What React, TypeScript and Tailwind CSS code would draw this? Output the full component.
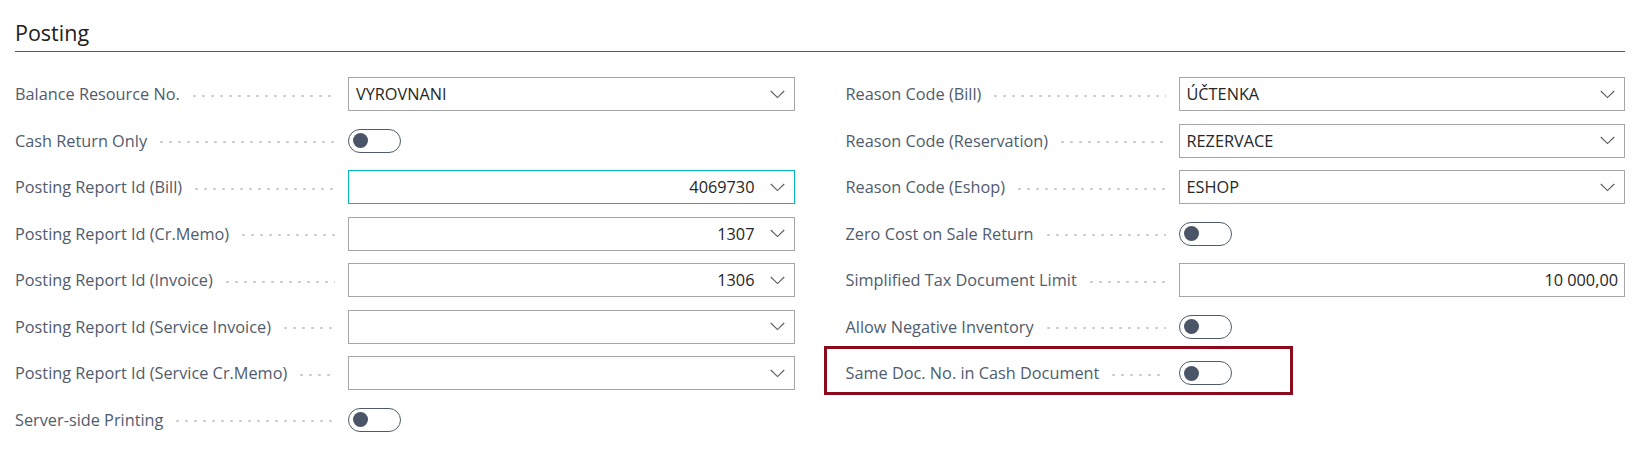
import React from 'react'

type Field =
  | { label: string; kind: 'select'; value?: string; align?: 'left' | 'right'; focused?: boolean }
  | { label: string; kind: 'text'; value: string; align?: 'left' | 'right' }
  | { label: string; kind: 'toggle'; highlight?: boolean }

const leftFields: Field[] = [
  { label: 'Balance Resource No.', kind: 'select', value: 'VYROVNANI' },
  { label: 'Cash Return Only', kind: 'toggle' },
  { label: 'Posting Report Id (Bill)', kind: 'select', value: '4069730', align: 'right', focused: true },
  { label: 'Posting Report Id (Cr.Memo)', kind: 'select', value: '1307', align: 'right' },
  { label: 'Posting Report Id (Invoice)', kind: 'select', value: '1306', align: 'right' },
  { label: 'Posting Report Id (Service Invoice)', kind: 'select' },
  { label: 'Posting Report Id (Service Cr.Memo)', kind: 'select' },
  { label: 'Server-side Printing', kind: 'toggle' }
]

const rightFields: Field[] = [
  { label: 'Reason Code (Bill)', kind: 'select', value: 'ÚČTENKA' },
  { label: 'Reason Code (Reservation)', kind: 'select', value: 'REZERVACE' },
  { label: 'Reason Code (Eshop)', kind: 'select', value: 'ESHOP' },
  { label: 'Zero Cost on Sale Return', kind: 'toggle' },
  { label: 'Simplified Tax Document Limit', kind: 'text', value: '10 000,00', align: 'right' },
  { label: 'Allow Negative Inventory', kind: 'toggle' },
  { label: 'Same Doc. No. in Cash Document', kind: 'toggle', highlight: true }
]

function Chevron() {
  return (
    <svg width="15" height="9" viewBox="0 0 15 9" className="shrink-0">
      <path d="M0.8 1 L7.5 7.6 L14.2 1" fill="none" stroke="#5a5a5a" strokeWidth="1.1" />
    </svg>
  )
}

function Toggle() {
  return (
    <div className="flex h-[24px] w-[53px] items-center rounded-full border border-[#4f5a6b] pl-[4px]">
      <div className="h-[15px] w-[15px] rounded-full bg-[#4a5568]" />
    </div>
  )
}

function FieldRow({ field }: { field: Field }) {
  return (
    <div className="relative flex h-[46.5px] items-center">
      {field.kind === 'toggle' && field.highlight && (
        <div className="pointer-events-none absolute left-[-22px] top-[-4px] h-[49px] w-[469px] border-[3px] border-[#8b0a1b]" />
      )}
      <div className="flex w-[333px] shrink-0 items-center pr-[13px]">
        <span className="whitespace-nowrap text-[16.3px] text-[#505c6d]">{field.label}</span>
        <span className="ml-[10px] mt-[3px] h-[4px] flex-1 bg-[radial-gradient(circle,#c3c6cb_1px,transparent_1.4px)] bg-[length:9px_4px] bg-[position:left_center]" />
      </div>
      {field.kind === 'toggle' ? (
        <Toggle />
      ) : (
        <div
          className={
            'flex h-[34px] flex-1 items-center border pl-[7px] text-[16.3px] text-[#262626] ' +
            (field.kind === 'select' && field.focused ? 'border-[#00b7c3]' : 'border-[#a6a6a6]') +
            (field.kind === 'select' ? ' pr-[9px]' : ' pr-[6px]')
          }
        >
          <span className={'flex-1 truncate ' + (field.align === 'right' && field.kind === 'select' ? 'text-right pr-[15px]' : field.align === 'right' ? 'text-right' : '')}>
            {field.value}
          </span>
          {field.kind === 'select' && <Chevron />}
        </div>
      )}
    </div>
  )
}

export default function App() {
  return (
    <div className="h-[455px] w-full bg-white px-[15px]" style={{ fontFamily: '"Segoe UI", "Open Sans", sans-serif' }}>
      <div className="flex h-[52px] w-[1610px] items-end border-b border-[#505a69] pb-[4px]">
        <h2 className="text-[21.5px] leading-[28px] text-[#212121]">Posting</h2>
      </div>
      <div className="grid w-[1610px] grid-cols-2 gap-x-[51px] pt-[19px]">
        <div className="flex flex-col">
          {leftFields.map(f => (
            <FieldRow key={f.label} field={f} />
          ))}
        </div>
        <div className="flex flex-col">
          {rightFields.map(f => (
            <FieldRow key={f.label} field={f} />
          ))}
        </div>
      </div>
    </div>
  )
}
